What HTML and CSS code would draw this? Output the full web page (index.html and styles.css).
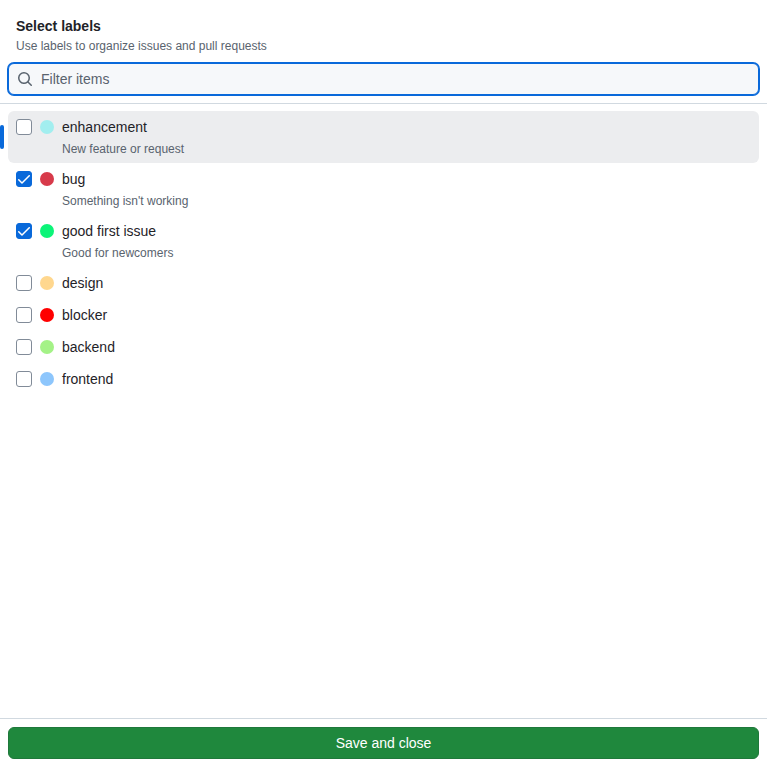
FILE: index.html
```html
<!DOCTYPE html>
<html lang="en">
<head>
<meta charset="utf-8">
<title>Select labels</title>
<link rel="stylesheet" href="styles.css">
</head>
<body>
<div class="panel">
  <header class="header">
    <h1 class="title">Select labels</h1>
    <p class="subtitle">Use labels to organize issues and pull requests</p>
  </header>
  <div class="filter">
    <svg class="search" viewBox="0 0 16 16" width="16" height="16"><path d="M10.68 11.74a6 6 0 0 1-7.922-8.982 6 6 0 0 1 8.982 7.922l3.04 3.04a.749.749 0 0 1-.326 1.275.749.749 0 0 1-.734-.215ZM11.5 7a4.499 4.499 0 1 0-8.997 0A4.499 4.499 0 0 0 11.5 7Z" transform="translate(0 0)"/></svg>
    <input class="input" type="text" placeholder="Filter items">
  </div>
  <ul class="list">
    <li class="item active"><span class="box"></span><span class="dot cyan"></span><div><div class="name">enhancement</div><div class="desc">New feature or request</div></div></li>
    <li class="item"><span class="box checked"><svg class="check" viewBox="0 0 12 9" width="12" height="9"><path fill-rule="evenodd" d="M11.78.22a.75.75 0 0 1 0 1.061L4.52 8.541a.75.75 0 0 1-1.062 0L.202 5.285a.75.75 0 0 1 1.061-1.061l2.725 2.723L10.718.22a.75.75 0 0 1 1.062 0Z"/></svg></span><span class="dot crimson"></span><div><div class="name">bug</div><div class="desc">Something isn't working</div></div></li>
    <li class="item"><span class="box checked"><svg class="check" viewBox="0 0 12 9" width="12" height="9"><path fill-rule="evenodd" d="M11.78.22a.75.75 0 0 1 0 1.061L4.52 8.541a.75.75 0 0 1-1.062 0L.202 5.285a.75.75 0 0 1 1.061-1.061l2.725 2.723L10.718.22a.75.75 0 0 1 1.062 0Z"/></svg></span><span class="dot mint"></span><div><div class="name">good first issue</div><div class="desc">Good for newcomers</div></div></li>
    <li class="item"><span class="box"></span><span class="dot sand"></span><div class="name">design</div></li>
    <li class="item"><span class="box"></span><span class="dot red"></span><div class="name">blocker</div></li>
    <li class="item"><span class="box"></span><span class="dot green"></span><div class="name">backend</div></li>
    <li class="item"><span class="box"></span><span class="dot blue"></span><div class="name">frontend</div></li>
  </ul>
  <footer class="footer"><button class="save" type="button">Save and close</button></footer>
</div>
</body>
</html>
```
FILE: styles.css
```css
* { box-sizing: border-box; }
body { margin: 0; font: 14px/20px "Liberation Sans", Arial, sans-serif; color: #1f2328; background: #fff; }
.panel { display: flex; flex-direction: column; height: 100vh; }
.header { padding: 16px 16px 0; }
.title { margin: 0; font-size: 14px; line-height: 21px; font-weight: 700; }
.subtitle { margin: 0; font-size: 12px; line-height: 18px; color: #59636e; }
.filter { display: flex; align-items: center; height: 32px; margin: 8px 8px 0; padding-left: 9px; border-radius: 6px; background: #f6f8fa; border: 1px solid #0969da; box-shadow: 0 0 0 1px #0969da; }
.search { fill: #59636e; flex: none; margin-left: -1px; }
.input { flex: 1; margin: 0; padding: 0 8px; border: 0; outline: 0; background: transparent; font: inherit; color: inherit; }
.input::placeholder { color: #59636e; opacity: 1; }
.list { flex: 1; margin: 8px 0 0; padding: 7px 8px; border-top: 1px solid #d1d9e0; list-style: none; }
.item { position: relative; display: flex; gap: 8px; padding: 6px 8px; border-radius: 6px; }
.active { background: #ecedef; }
.active::before { content: ""; position: absolute; left: -8px; top: 14px; width: 4px; height: 24px; background: #0969da; border-radius: 6px; }
.box { flex: none; width: 16px; height: 16px; margin-top: 2px; border: 1px solid #818b98; border-radius: 3px; background: #fff; }
.checked { display: grid; place-items: center; background: #0969da; border-color: #0969da; }
.check { display: block; fill: #fff; }
.dot { flex: none; width: 14px; height: 14px; margin-top: 3px; border-radius: 50%; }
.desc { margin-top: 4px; font-size: 12px; line-height: 16px; color: #59636e; }
.cyan { background: #a2eeef; }
.crimson { background: #d73a4a; }
.mint { background: #0cf478; }
.sand { background: #ffd78e; }
.red { background: #ff0000; }
.green { background: #a4f287; }
.blue { background: #8dc6fc; }
.footer { padding: 8px; border-top: 1px solid #d1d9e0; }
.save { display: block; width: 100%; height: 32px; padding: 0; border: 1px solid #1f783b; border-radius: 6px; background: #1f883d; color: #fff; font: inherit; }
```
